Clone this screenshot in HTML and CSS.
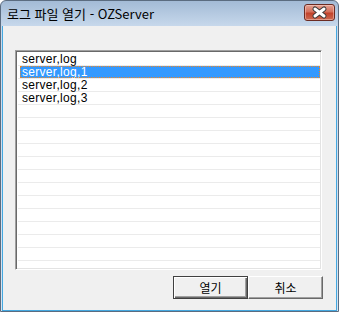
FILE: index.html
```html
<!DOCTYPE html>
<html lang="ko">

<head>
    <meta charset="UTF-8">
    <meta name="viewport" content="width=device-width, initial-scale=1.0">
    <title>로그 파일 열기 - OZServer</title>
    <link rel="stylesheet" href="styles.css">
</head>

<body>
    <div class="window">
        <div class="titlebar">
            <span class="title">로그 파일 열기 - OZServer</span>
            <button class="close" title="닫기">
                <svg width="29" height="15" viewBox="0 0 29 15">
                    <path d="M10 4 L19 11 M19 4 L10 11" stroke="#3b3b3b" stroke-width="5" stroke-linecap="round" fill="none" />
                    <path d="M10 4 L19 11 M19 4 L10 11" stroke="#ffffff" stroke-width="3" stroke-linecap="round" fill="none" />
                </svg>
            </button>
        </div>
        <div class="client">
            <ul class="list">
                <li class="row"><span class="item">server,log</span></li>
                <li class="row"><span class="item selected">server,log,1</span></li>
                <li class="row"><span class="item">server,log,2</span></li>
                <li class="row"><span class="item">server,log,3</span></li>
                <li class="row"></li>
                <li class="row"></li>
                <li class="row"></li>
                <li class="row"></li>
                <li class="row"></li>
                <li class="row"></li>
                <li class="row"></li>
                <li class="row"></li>
                <li class="row"></li>
                <li class="row"></li>
                <li class="row"></li>
                <li class="row"></li>
            </ul>
            <div class="actions">
                <button class="btn default">열기</button>
                <button class="btn">취소</button>
            </div>
        </div>
    </div>
</body>

</html>
```

FILE: styles.css
```css
* {
    margin: 0px;
    padding: 0px;
    box-sizing: border-box;
}

body {
    background-color: #ffffff;
    width: 339px;
    height: 312px;
    overflow: hidden;
}

.window {
    width: 339px;
    height: 312px;
    border: 1px solid #5b6c80;
    border-radius: 6px 6px 0 0;
    padding: 0 1px;
    background: linear-gradient(#a3bbd6, #c8d9ec 26px, #d6e4f2);
    display: flex;
    flex-direction: column;
}

.titlebar {
    height: 25px;
    display: flex;
    align-items: flex-start;
    justify-content: space-between;
    padding: 0 2px 0 5px;
}

.title {
    font-family: "Noto Sans CJK KR", "Noto Sans", sans-serif;
    font-size: 13px;
    line-height: 15px;
    margin-top: 5px;
    color: #000000;
}

.close {
    width: 31px;
    height: 17px;
    margin-top: 3px;
    border: 1px solid #6b2b22;
    border-radius: 3px;
    background: linear-gradient(#e3a192, #d4705c 45%, #c2432c 55%, #cc6a52);
    box-shadow: inset 0 0 0 1px rgba(255, 220, 210, 0.45);
    display: flex;
    align-items: center;
    justify-content: center;
}

.client {
    flex: 1;
    background-color: #f0f0f0;
    border: 1px solid #44a8e0;
    border-top: none;
    padding: 24px 0 0 12px;
}

.list {
    list-style: none;
    width: 307px;
    height: 220px;
    background-color: #ffffff;
    border: 1px solid;
    border-color: #a0a0a0 #ffffff #ffffff #a0a0a0;
    box-shadow: inset 1px 1px #696969, inset -1px -1px #e3e3e3;
    padding: 2px 1px 0 2px;
}

.row {
    height: 13px;
    border-bottom: 1px solid #ebebeb;
}

.item {
    display: block;
    height: 12px;
    margin-left: 2px;
    padding-left: 2px;
    font-family: "Liberation Sans", Arial, sans-serif;
    font-size: 12px;
    letter-spacing: 0.3px;
    line-height: 12px;
    color: #000000;
}

.selected {
    background-color: #3399ff;
    color: #ffffff;
    outline: 1px dotted #e8862a;
    outline-offset: -1px;
}

.actions {
    width: 308px;
    display: flex;
    justify-content: flex-end;
    margin-top: 6px;
}

.btn {
    width: 75px;
    height: 23px;
    background-color: #f0f0f0;
    font-family: "Noto Sans CJK KR", sans-serif;
    font-size: 12px;
    color: #000000;
    border: 1px solid;
    border-color: #ffffff #696969 #696969 #ffffff;
    box-shadow: inset -1px -1px #a0a0a0;
}

.btn.default {
    border: 1px solid #404040;
    box-shadow: inset 1px 1px #ffffff, inset -1px -1px #696969, inset -2px -2px #a0a0a0;
}
```
